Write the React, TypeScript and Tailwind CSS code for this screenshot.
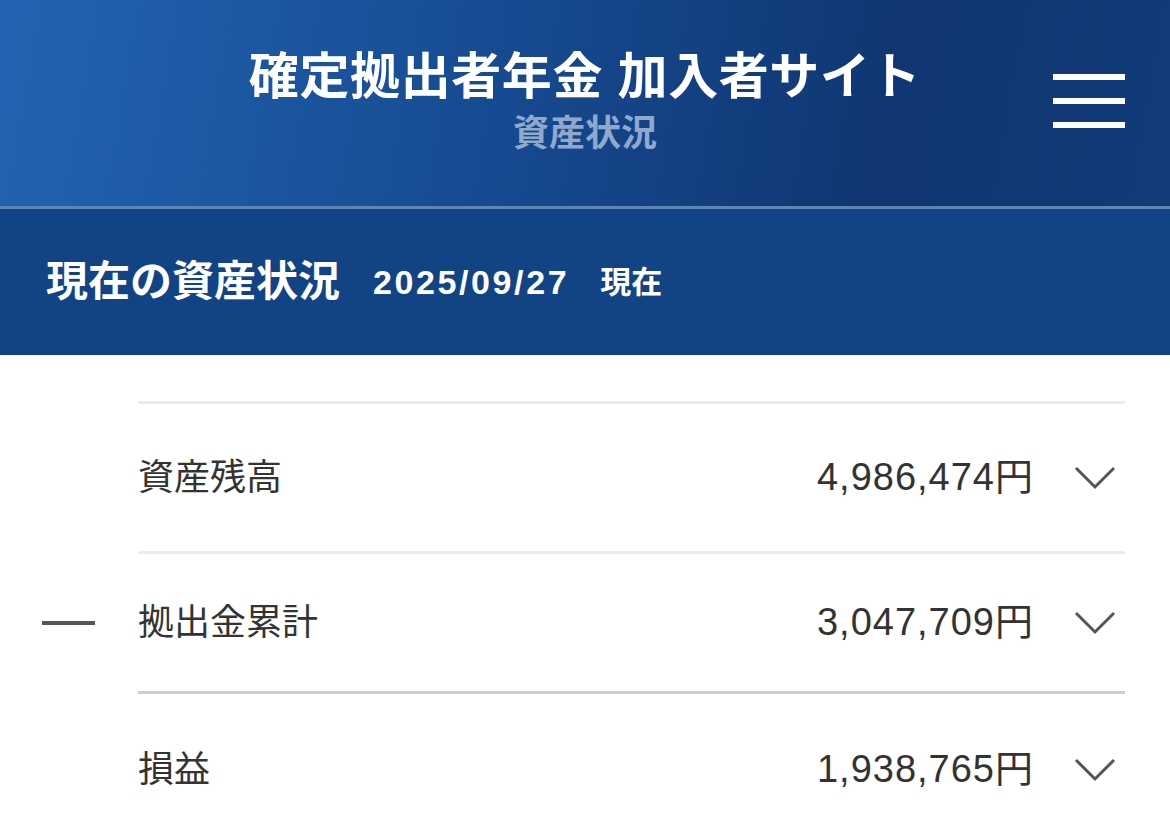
import React from 'react';

const FONT = '"Liberation Sans", "Noto Sans CJK JP", sans-serif';

interface Row {
  label: string;
  value: string;
  height: string;
  border: string;
  dash?: boolean;
}

const rows: Row[] = [
  { label: '資産残高', value: '4,986,474円', height: 'h-[150px]', border: 'border-[#ebebeb]' },
  { label: '拠出金累計', value: '3,047,709円', height: 'h-[140px]', border: 'border-[#ebebeb]', dash: true },
  { label: '損益', value: '1,938,765円', height: 'h-[154px]', border: 'border-[#cdcdcd]' },
];

const Chevron = () => (
  <svg width="42" height="26" viewBox="0 0 42 26" className="shrink-0">
    <polyline points="2,3 21,22 40,3" fill="none" stroke="#555" strokeWidth="3" />
  </svg>
);

export default function App() {
  return (
    <div className="w-[1170px] h-[828px] overflow-hidden bg-white" style={{ fontFamily: FONT }}>
      {/* ヘッダー */}
      <header className="relative h-[206px] bg-[linear-gradient(100deg,#2264b2_0%,#174c93_40%,#0f3672_75%,#113b79_100%)] flex flex-col items-center pt-[44px]">
        <h1 className="text-[50px] leading-[66px] font-bold text-white tracking-[0.6px]">確定拠出者年金 加入者サイト</h1>
        <div className="text-[36px] leading-[46px] font-bold text-[#8fa8cc] mt-[1px]">資産状況</div>
        <button className="absolute right-[45px] top-[74px] w-[72px] flex flex-col gap-[18px]">
          <span className="block h-[6px] bg-white" />
          <span className="block h-[6px] bg-white" />
          <span className="block h-[6px] bg-white" />
        </button>
      </header>
      <div className="h-[3px] bg-[#5f83b3]" />

      {/* 現在の資産状況 */}
      <div className="h-[146px] bg-[#114385] flex items-center pl-[46px] text-white font-bold">
        <span className="text-[42px] leading-none">現在の資産状況</span>
        <span className="text-[34px] leading-none ml-[33px] tracking-[2.6px]">2025/09/27</span>
        <span className="text-[31px] leading-none ml-[31px]">現在</span>
      </div>

      {/* 一覧 */}
      <div className="pt-[46px]">
        {rows.map((r) => (
          <div key={r.label} className="flex">
            <div className="w-[138px] shrink-0 flex items-center pl-[42px] pt-[3px]">
              {r.dash && <span className="block w-[53px] h-[4px] bg-[#555]" />}
            </div>
            <div className={`flex-1 mr-[45px] border-t-[3px] ${r.border} ${r.height} flex items-center`}>
              <span className="text-[36px] text-[#333] flex-1">{r.label}</span>
              <span className="text-[38px] text-[#333] tracking-[1px]">{r.value}</span>
              <span className="ml-[40px] mr-[9px]">
                <Chevron />
              </span>
            </div>
          </div>
        ))}
      </div>
    </div>
  );
}
